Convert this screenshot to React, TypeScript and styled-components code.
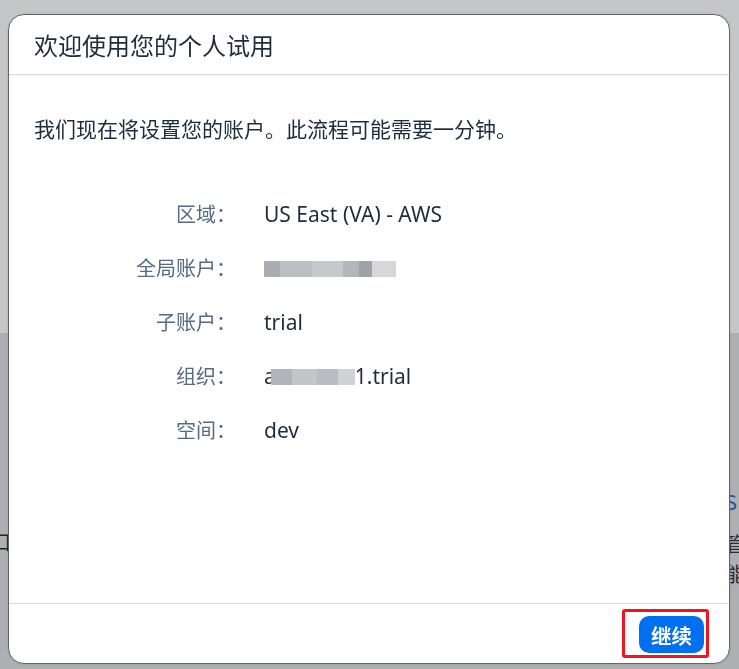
import React from "react";
import styled, { createGlobalStyle } from "styled-components";

const Global = createGlobalStyle`
  html, body { margin: 0; padding: 0; }
  body {
    width: 739px; height: 669px; overflow: hidden;
    font-family: "Noto Sans", "Noto Sans CJK SC", sans-serif;
    background: #aeafb2;
  }
`;

const Page = styled.div`
  width: 739px;
  height: 669px;
  display: flex;
  flex-direction: column;
`;

const TopBand = styled.div`
  height: 333px;
  background: #c5c6c8;
`;

const LowerBand = styled.div`
  flex: 1;
  background: #aeafb2;
  display: flex;
  justify-content: space-between;
  padding-top: 154px;
`;

const LeftPeek = styled.div`
  margin-left: -9px;
  margin-top: 40px;
  font-size: 20px;
  color: #22262b;
  font-family: "Noto Sans CJK SC", sans-serif;
`;

const RightPeek = styled.div`
  width: 14px;
  display: flex;
  flex-direction: column;
  font-family: "Noto Sans CJK SC", sans-serif;
  font-size: 20px;
  line-height: 30px;
  overflow: hidden;
  white-space: nowrap;
`;

const PeekLine = styled.span<{ $blue?: boolean }>`
  color: ${(p) => (p.$blue ? "#1a58a0" : "#2a2e33")};
  margin-bottom: ${(p) => (p.$blue ? "12px" : "0")};
`;

const Dialog = styled.div`
  position: fixed;
  left: 8px;
  top: 14px;
  width: 720px;
  height: 648px;
  background: #fff;
  border: 1px solid #5e6672;
  border-radius: 16px;
  display: flex;
  flex-direction: column;
  overflow: hidden;
  box-shadow: 0 0 2px rgba(0,0,0,0.15);
`;

const Header = styled.div`
  height: 59px;
  display: flex;
  align-items: center;
  padding: 0 25px;
  border-bottom: 1px solid #d9dadb;
  box-shadow: 0 1px 2px rgba(0,0,0,0.06);
`;

const Title = styled.h1`
  margin: 0;
  font-weight: 400;
  font-size: 24px;
  color: #1d2d3e;
  font-family: "Noto Sans CJK SC", sans-serif;
`;

const Body = styled.div`
  flex: 1;
  padding: 38px 25px 0;
`;

const Intro = styled.p`
  margin: 0;
  font-size: 21px;
  color: #1d2d3e;
  font-family: "Noto Sans CJK SC", sans-serif;
  line-height: 30px;
`;

const Fields = styled.div`
  margin-top: 56px;
  display: grid;
  grid-template-columns: 202px 1fr;
  column-gap: 28px;
  row-gap: 24px;
`;

const Label = styled.div`
  text-align: right;
  font-size: 20px;
  line-height: 30px;
  color: #556b82;
  font-family: "Noto Sans CJK SC", sans-serif;
`;

const Value = styled.div`
  font-size: 21px;
  line-height: 30px;
  color: #1d2d3e;
  font-family: "Noto Sans", "Noto Sans CJK SC", sans-serif;
  display: flex;
  align-items: center;
`;

const Blur = styled.span<{ $w: number }>`
  display: inline-block;
  width: ${(p) => p.$w}px;
  height: 16px;
  margin-top: 2px;
  background: linear-gradient(90deg,
    #a9adb2 0 12%, #bcc0c4 12% 36%, #c6c9cc 36% 60%, #b3b7bb 60% 72%, #9fa3a8 72% 82%, #d5d7d9 82% 100%);
  filter: blur(0.6px);
`;

const BlurOrg = styled(Blur)`
  margin-left: -5px;
  background: linear-gradient(90deg,
    #b1b5b9 0 25%, #c3c6c9 25% 55%, #b9bcc0 55% 80%, #d0d2d4 80% 100%);
`;

const Footer = styled.div`
  height: 59px;
  border-top: 1px solid #d9dadb;
  display: flex;
  align-items: center;
  justify-content: flex-end;
  padding-right: 20px;
`;

const Highlight = styled.div`
  border: 3.5px solid #f0141e;
  border-radius: 3px;
  padding: 4px 2px 2px 14px;
  display: flex;
`;

const Button = styled.button`
  height: 37px;
  min-width: 65px;
  border: none;
  border-radius: 10px;
  background: #0070f2;
  color: #fff;
  font-size: 20.5px;
  font-weight: 700;
  font-family: "Noto Sans CJK SC", sans-serif;
  padding: 0 10px;
  cursor: pointer;
`;

export default function App() {
  return (
    <>
      <Global />
      <Page>
        <TopBand />
        <LowerBand>
          <LeftPeek>口</LeftPeek>
          <RightPeek>
            <PeekLine $blue>S</PeekLine>
            <PeekLine>管</PeekLine>
            <PeekLine>能</PeekLine>
          </RightPeek>
        </LowerBand>
      </Page>
      <Dialog role="dialog">
        <Header>
          <Title>欢迎使用您的个人试用</Title>
        </Header>
        <Body>
          <Intro>我们现在将设置您的账户。此流程可能需要一分钟。</Intro>
          <Fields>
            <Label>区域：</Label>
            <Value>US East (VA) - AWS</Value>
            <Label>全局账户：</Label>
            <Value>
              <Blur $w={132} />
            </Value>
            <Label>子账户：</Label>
            <Value>trial</Value>
            <Label>组织：</Label>
            <Value>
              a<BlurOrg $w={84} />1.trial
            </Value>
            <Label>空间：</Label>
            <Value>dev</Value>
          </Fields>
        </Body>
        <Footer>
          <Highlight>
            <Button>继续</Button>
          </Highlight>
        </Footer>
      </Dialog>
    </>
  );
}
